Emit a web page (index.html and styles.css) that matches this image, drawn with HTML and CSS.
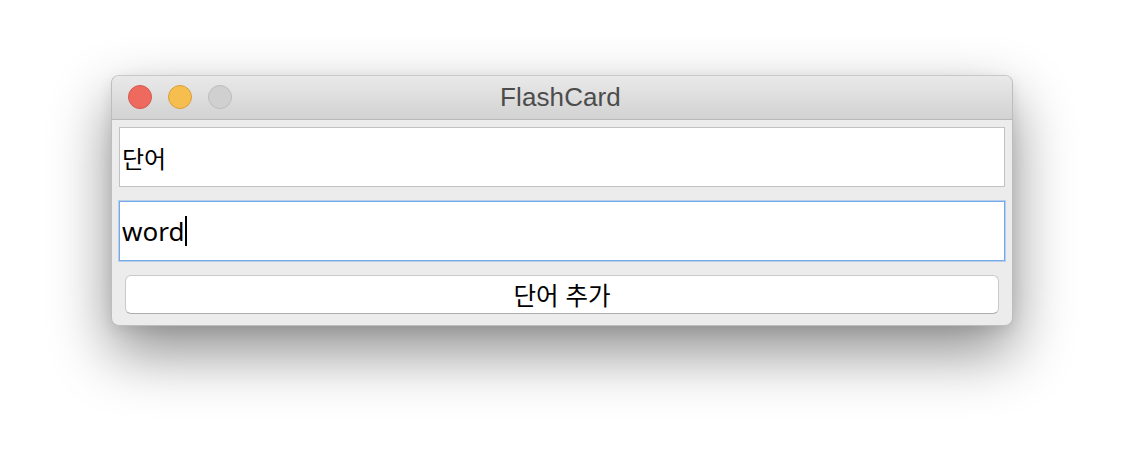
FILE: index.html
```html
<!DOCTYPE html>
<html lang="ko">
<head>
<meta charset="utf-8">
<title>FlashCard</title>
<link rel="stylesheet" href="styles.css">
</head>
<body>
<div class="stage">
  <div class="window">
    <div class="titlebar">
      <div class="lights">
        <span class="light red"></span>
        <span class="light yellow"></span>
        <span class="light gray"></span>
      </div>
      <div class="title">FlashCard</div>
    </div>
    <div class="content">
      <div class="field">단어</div>
      <div class="field focused"><span>word</span><span class="caret"></span></div>
      <div class="button">단어 추가</div>
    </div>
  </div>
</div>
</body>
</html>
```
FILE: styles.css
```css
html, body {
  margin: 0;
  padding: 0;
  background: #ffffff;
}
.stage {
  padding: 75px 0 0 111px;
  width: 1124px;
  height: 474px;
  box-sizing: border-box;
  overflow: hidden;
}
.window {
  width: 902px;
  height: 251px;
  box-sizing: border-box;
  border: 1px solid #bdbdbd;
  border-top-color: #c8c8c8;
  border-radius: 8px;
  background: #ececec;
  box-shadow: 0 26px 60px rgba(0, 0, 0, 0.45), 0 4px 14px rgba(0, 0, 0, 0.08);
  display: flex;
  flex-direction: column;
  overflow: hidden;
}
.titlebar {
  position: relative;
  height: 43px;
  flex: none;
  background: linear-gradient(#e9e9e9, #d2d2d2);
  border-bottom: 1px solid #b9b9b9;
  display: flex;
  align-items: center;
  justify-content: center;
}
.lights {
  position: absolute;
  left: 16px;
  top: 9px;
  display: flex;
  gap: 16px;
}
.light {
  width: 24px;
  height: 24px;
  box-sizing: border-box;
  border-radius: 50%;
  display: block;
}
.red { background: #ee6a5f; border: 1px solid #d5584e; }
.yellow { background: #f5be4f; border: 1px solid #d9a03c; }
.gray { background: #d0d0d0; border: 1px solid #bcbcbc; }
.title {
  font-family: "Liberation Sans", Arial, sans-serif;
  font-size: 26px;
  color: #4c4c4c;
  letter-spacing: 0.1px;
  margin-left: -3px;
}
.content {
  padding: 7px 7px 0 7px;
  display: flex;
  flex-direction: column;
}
.field {
  height: 60px;
  box-sizing: border-box;
  background: #ffffff;
  border: 1px solid #c2c2c2;
  padding: 0 2px;
  display: flex;
  align-items: center;
  font-family: "Noto Sans", "Noto Sans CJK KR", sans-serif;
  font-size: 26px;
  color: #000000;
  margin-bottom: 14px;
}
.field:first-child {
  font-family: "Noto Sans CJK KR", sans-serif;
  font-size: 24px;
}
.field.focused {
  border: 1px solid #75aae8;
  box-shadow: 0 0 0 1px rgba(117, 170, 232, 0.45);
}
.caret {
  display: block;
  width: 2px;
  height: 30px;
  background: #000000;
  margin-left: 1px;
}
.button {
  margin: 0 6px;
  height: 39px;
  box-sizing: border-box;
  background: #ffffff;
  border: 1px solid #c9c9c9;
  border-bottom-color: #adadad;
  border-radius: 6px;
  display: flex;
  align-items: center;
  justify-content: center;
  font-family: "Noto Sans CJK KR", sans-serif;
  font-size: 24.5px;
  color: #000000;
}
```
